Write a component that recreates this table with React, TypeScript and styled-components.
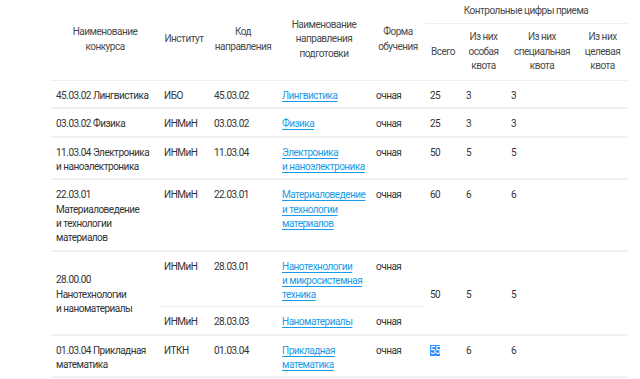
import React from 'react';
import styled, { createGlobalStyle } from 'styled-components';

const GlobalStyle = createGlobalStyle`
    body {
        margin: 0;
        background: #fff;
        font-family: Roboto, "Noto Sans", Arial, sans-serif;
    }
`;

const PageWrapper = styled.div`
    padding-left: 51px;
`;

const Table = styled.table`
    width: 576px;
    table-layout: fixed;
    border-collapse: collapse;
    font-size: 10px;
    letter-spacing: -0.5px;
    line-height: 14.3px;
    color: #333;
`;

const HeadCell = styled.th<{ $sub?: boolean }>`
    font-weight: normal;
    color: #4a4a4a;
    text-align: center;
    vertical-align: middle;
    padding: ${p => (p.$sub ? '6px 5px 7px' : '4px 5px 5px')};
    border-bottom: 1px solid #eeeeee;
`;

const GroupCell = styled.th`
    font-weight: normal;
    color: #4a4a4a;
    text-align: center;
    padding: 4px 5px 5px;
    border-bottom: 1px solid #eeeeee;
`;

const Cell = styled.td<{ $middle?: boolean; $inner?: boolean }>`
    text-align: left;
    vertical-align: ${p => (p.$middle ? 'middle' : 'top')};
    padding: 8px 5px 4px;
    border-bottom: ${p => (p.$inner ? '1px solid #eeeeee' : '2px solid #f0f0f0')};
    overflow-wrap: anywhere;
`;

const Link = styled.a`
    color: #1a9be6;
    text-decoration: underline;
    text-underline-offset: 2px;
    cursor: pointer;
`;

const Selected = styled.span`
    background: #3390ff;
    color: #fff;
`;

type Direction = {
    institute: string;
    code: string;
    name: string;
};

type Row = {
    contest: string;
    directions: Direction[];
    total: string;
    special: string;
    extra: string;
    selected?: boolean;
};

// "и" is tied to the next word with a no-break space, as on the original page
const rows: Row[] = [
    { contest: '45.03.02 Лингвистика', directions: [{ institute: 'ИБО', code: '45.03.02', name: 'Лингвистика' }], total: '25', special: '3', extra: '3' },
    { contest: '03.03.02 Физика', directions: [{ institute: 'ИНМиН', code: '03.03.02', name: 'Физика' }], total: '25', special: '3', extra: '3' },
    { contest: '11.03.04 Электроника и\u00A0наноэлектроника', directions: [{ institute: 'ИНМиН', code: '11.03.04', name: 'Электроника и\u00A0наноэлектроника' }], total: '50', special: '5', extra: '5' },
    { contest: '22.03.01 Материаловедение и\u00A0технологии материалов', directions: [{ institute: 'ИНМиН', code: '22.03.01', name: 'Материаловедение и\u00A0технологии материалов' }], total: '60', special: '6', extra: '6' },
    {
        contest: '28.00.00 Нанотехнологии и\u00A0наноматериалы',
        directions: [
            { institute: 'ИНМиН', code: '28.03.01', name: 'Нанотехнологии и\u00A0микросистемная техника' },
            { institute: 'ИНМиН', code: '28.03.03', name: 'Наноматериалы' },
        ],
        total: '50', special: '5', extra: '5',
    },
    { contest: '01.03.04 Прикладная математика', directions: [{ institute: 'ИТКН', code: '01.03.04', name: 'Прикладная математика' }], total: '55', special: '6', extra: '6', selected: true },
];

const widths = [108, 50, 68, 94, 54, 36, 45, 72, 49];

export default function App() {
    return (
        <>
            <GlobalStyle />
            <PageWrapper>
                <Table>
                    <colgroup>
                        {widths.map((w, i) => <col key={i} style={{ width: w }} />)}
                    </colgroup>
                    <thead>
                        <tr>
                            <HeadCell rowSpan={2}>Наименование конкурса</HeadCell>
                            <HeadCell rowSpan={2}>Институт</HeadCell>
                            <HeadCell rowSpan={2}>Код направления</HeadCell>
                            <HeadCell rowSpan={2}>Наименование направления подготовки</HeadCell>
                            <HeadCell rowSpan={2}>Форма обучения</HeadCell>
                            <GroupCell colSpan={4}>Контрольные цифры приема</GroupCell>
                        </tr>
                        <tr>
                            <HeadCell $sub>Всего</HeadCell>
                            <HeadCell $sub>Из них особая квота</HeadCell>
                            <HeadCell $sub>Из них специальная квота</HeadCell>
                            <HeadCell $sub>Из них целевая квота</HeadCell>
                        </tr>
                    </thead>
                    <tbody>
                        {rows.map(row => {
                            const multi = row.directions.length > 1;
                            return row.directions.map((d, i) => {
                                const inner = multi && i < row.directions.length - 1;
                                return (
                                    <tr key={row.contest + d.code}>
                                        {i === 0 && (
                                            <Cell rowSpan={row.directions.length} $middle={multi}>{row.contest}</Cell>
                                        )}
                                        <Cell $inner={inner}>{d.institute}</Cell>
                                        <Cell $inner={inner}>{d.code}</Cell>
                                        <Cell $inner={inner}><Link>{d.name}</Link></Cell>
                                        <Cell $inner={inner}>очная</Cell>
                                        {i === 0 && (
                                            <>
                                                <Cell rowSpan={row.directions.length} $middle={multi}>
                                                    {row.selected ? <Selected>{row.total}</Selected> : row.total}
                                                </Cell>
                                                <Cell rowSpan={row.directions.length} $middle={multi}>{row.special}</Cell>
                                                <Cell rowSpan={row.directions.length} $middle={multi}>{row.extra}</Cell>
                                                <Cell rowSpan={row.directions.length} $middle={multi}></Cell>
                                            </>
                                        )}
                                    </tr>
                                );
                            });
                        })}
                    </tbody>
                </Table>
            </PageWrapper>
        </>
    );
}
